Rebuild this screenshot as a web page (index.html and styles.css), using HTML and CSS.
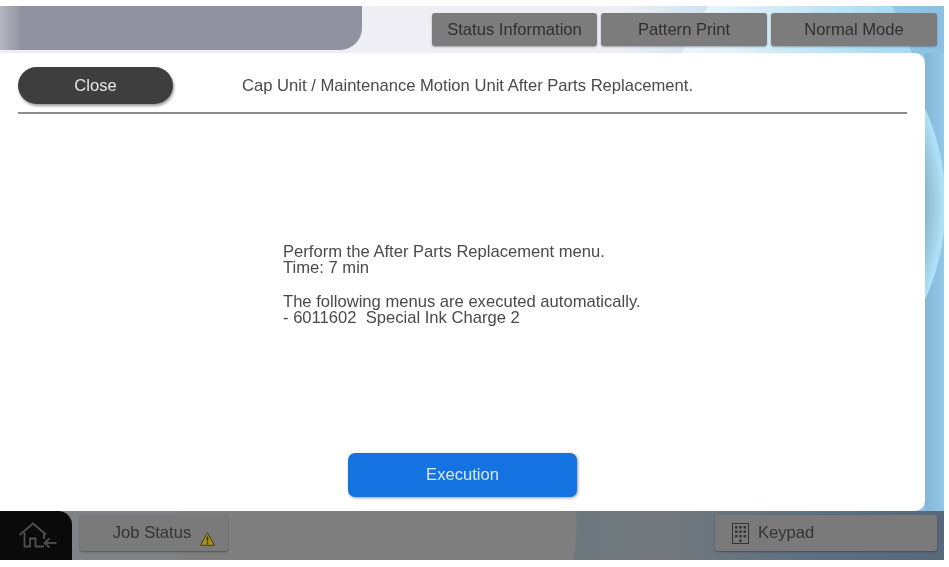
FILE: index.html
```html
<!DOCTYPE html>
<html lang="en">
<head>
    <meta charset="UTF-8">
    <title>Cap Unit / Maintenance Motion Unit</title>
    <link rel="stylesheet" href="styles.css">
</head>
<body>
    <div class="screen">
        <div class="wallpaper">
            <div class="wall-pale"></div>
            <div class="wall-dark"></div>
            <div class="wall-light"></div>
            <div class="wall-strip"></div>
        </div>

        <header class="top-bar">
            <div class="top-tab"></div>
            <nav class="top-buttons">
                <div class="top-btn top-btn-status">Status Information</div>
                <div class="top-btn">Pattern Print</div>
                <div class="top-btn">Normal Mode</div>
            </nav>
        </header>

        <main class="panel">
            <div class="panel-head">
                <div class="close-btn">Close</div>
                <div class="panel-title">Cap Unit / Maintenance Motion Unit After Parts Replacement.</div>
            </div>
            <div class="panel-body">
                <p>Perform the After Parts Replacement menu.<br>Time: 7 min</p>
                <p>The following menus are executed automatically.<br>- 6011602&nbsp; Special Ink Charge 2</p>
            </div>
            <div class="panel-foot">
                <div class="exec-btn">Execution</div>
            </div>
        </main>

        <footer class="bottom-bar">
            <div class="home-btn">
                <svg width="38" height="27" viewBox="0 0 38 27" fill="none" stroke="#505050" stroke-width="1.8">
                    <path d="M.7 13 L14 1.5 L27 12.5"/>
                    <path d="M5.5 10.5 V24.5 H11 V16.5 H16.5 V24.5 H25"/>
                    <path d="M25 10.5 V17"/>
                    <path d="M25.5 21 H37.5"/>
                    <path d="M30.5 16.5 L25.5 21 L30.5 25.5"/>
                </svg>
            </div>
            <div class="job-btn">
                <span>Job Status</span>
                <svg class="warn-icon" width="15" height="14" viewBox="0 0 15 14">
                    <path d="M7.5 .8 L14.5 13.3 H.5 Z" fill="#b0900f" stroke="#3f3a20" stroke-width="1"/>
                    <path d="M7.5 4.4 V9.4 M7.5 10.4 V12.2" stroke="#2c2a1c" stroke-width="1.4"/>
                </svg>
            </div>
            <div class="keypad-btn">
                <svg width="17" height="21" viewBox="0 0 17 21" fill="none">
                    <rect x=".5" y=".5" width="16" height="20" stroke="#333"/>
                    <g fill="#333">
                        <rect x="3" y="3" width="2.5" height="2.5"/><rect x="7.25" y="3" width="2.5" height="2.5"/><rect x="11.5" y="3" width="2.5" height="2.5"/>
                        <rect x="3" y="7.5" width="2.5" height="2.5"/><rect x="7.25" y="7.5" width="2.5" height="2.5"/><rect x="11.5" y="7.5" width="2.5" height="2.5"/>
                        <rect x="3" y="12" width="2.5" height="2.5"/><rect x="7.25" y="12" width="2.5" height="2.5"/><rect x="11.5" y="12" width="2.5" height="2.5"/>
                        <rect x="7.25" y="16.5" width="2.5" height="2.5"/>
                    </g>
                </svg>
                <span>Keypad</span>
            </div>
        </footer>
    </div>
</body>
</html>
```

FILE: styles.css
```css
body, html {
    margin: 0; padding: 0; height: 100%; width: 100%;
    background-color: #fff;
    overflow: hidden;
}

.screen {
    position: relative;
    width: 944px; height: 554px;
    margin-top: 6px;
    display: flex; flex-direction: column;
    overflow: hidden;
    font-family: "Liberation Sans", Arial, sans-serif;
    font-size: 16.6px;
    color: #4a4a4a;
    filter: blur(0.3px);
}

/* backdrop behind the panel */
.wallpaper {
    position: absolute; top: 0; left: 0; width: 100%; height: 100%;
    background-color: #8fc4e6;
}
.wall-pale {
    position: absolute; top: 0; left: 660px; width: 284px; height: 47px;
    background: linear-gradient(to right, #f2f6fa 0%, #e6f4fb 20%, #a9dcf5 80%, #a6d9f3 100%);
}
.wall-dark {
    position: absolute; top: 0; left: 880px; width: 64px; height: 47px;
    background: linear-gradient(to right, #94c9ea, #8cc0e2);
    clip-path: polygon(12px 0, 100% 0, 100% 100%, 32px 100%);
}
.wall-light {
    position: absolute; top: 0; left: 0; width: 708px; height: 47px;
    background: linear-gradient(to right, #eeeef4 0%, #eeeef4 88%, #cfe3f2 100%);
    clip-path: polygon(0 0, 100% 0, 682px 100%, 0 100%);
}
.wall-strip {
    position: absolute; top: 47px; left: 925px; width: 19px; height: 458px;
    background:
        radial-gradient(circle at -214px 151px, #8db6cf 214px, #aee0f6 232px, #aee0f6 234px, transparent 235px),
        linear-gradient(to right, #82b5d6, #94c8ea);
}

.top-bar {
    position: relative;
    height: 47px;
    display: flex; justify-content: space-between;
}
.top-tab {
    width: 362px; height: 44px;
    background: linear-gradient(to right, #b5b5c0 0px, #92919f 22px);
    border-bottom-right-radius: 22px;
}
.top-buttons { display: flex; gap: 4px; padding: 7px 7px 0 0; }
.top-btn {
    width: 166px; height: 33px;
    display: flex; align-items: center; justify-content: center;
    background-color: #7c7c7c;
    border-radius: 3px;
    box-shadow: 0 1px 2px rgba(60, 60, 70, 0.45);
    color: #2f2f2f;
}
.top-btn-status { width: 165px; }

.panel {
    position: relative;
    width: 925px; height: 458px;
    box-sizing: border-box;
    padding: 0 18px;
    background-color: #fff;
    border-radius: 0 10px 10px 0;
    display: flex; flex-direction: column;
}
.panel-head {
    height: 61px; flex: none;
    display: flex; align-items: center;
    border-bottom: 2px solid #8c8c8c;
    box-sizing: border-box;
    padding-top: 2px;
}
.close-btn {
    width: 155px; height: 37px; margin-top: 4px;
    display: flex; align-items: center; justify-content: center;
    background-color: #3e3e3e;
    border-radius: 19px;
    box-shadow: 1px 2px 3px rgba(0, 0, 0, 0.4);
    color: #e6e6e6;
}
.panel-title { margin-left: 69px; margin-top: 4px; }

.panel-body {
    flex: 1;
    padding: 130px 0 0 265px;
    line-height: 16px;
}
.panel-body p { margin: 0 0 18px; }

.panel-foot {
    display: flex; justify-content: center;
    padding: 0 0 14px 0;
}
.exec-btn {
    width: 229px; height: 44px;
    display: flex; align-items: center; justify-content: center;
    background-color: #1473e0;
    border-radius: 7px;
    box-shadow: 1px 1px 3px rgba(0, 0, 0, 0.4);
    color: #d8e8f8;
}

.bottom-bar {
    position: relative;
    height: 49px;
    display: flex; align-items: flex-start;
    background:
        linear-gradient(to right, #808288 177px, #7e7f7e 177px, #7e7f7e 300px, transparent 300px),
        radial-gradient(circle at 377px 14px, #7e7f7e 199px, transparent 200px),
        linear-gradient(to right, #6b777e 570px, #72787c 660px, #5f7180 800px, #56697a 100%);
}
.home-btn {
    width: 72px; height: 49px;
    box-sizing: border-box;
    padding-left: 4px;
    display: flex; align-items: center; justify-content: center;
    background-color: #0a0a0a;
    border-top-right-radius: 14px;
}
.job-btn {
    width: 148px; height: 36px;
    margin: 4px 0 0 8px;
    box-sizing: border-box;
    padding-left: 20px;
    display: flex; align-items: center; justify-content: center; gap: 9px;
    background-color: #7a7a7a;
    border-radius: 3px;
    box-shadow: 0 1px 2px rgba(40, 40, 40, 0.5);
    color: #333;
}
.warn-icon { margin-top: 12px; }
.keypad-btn {
    width: 222px; height: 36px;
    margin: 4px 0 0 487px;
    box-sizing: border-box;
    padding-left: 17px;
    display: flex; align-items: center; gap: 9px;
    background-color: #7a7a7a;
    border-radius: 3px;
    box-shadow: 0 1px 2px rgba(40, 40, 40, 0.5);
    color: #333;
}
```
